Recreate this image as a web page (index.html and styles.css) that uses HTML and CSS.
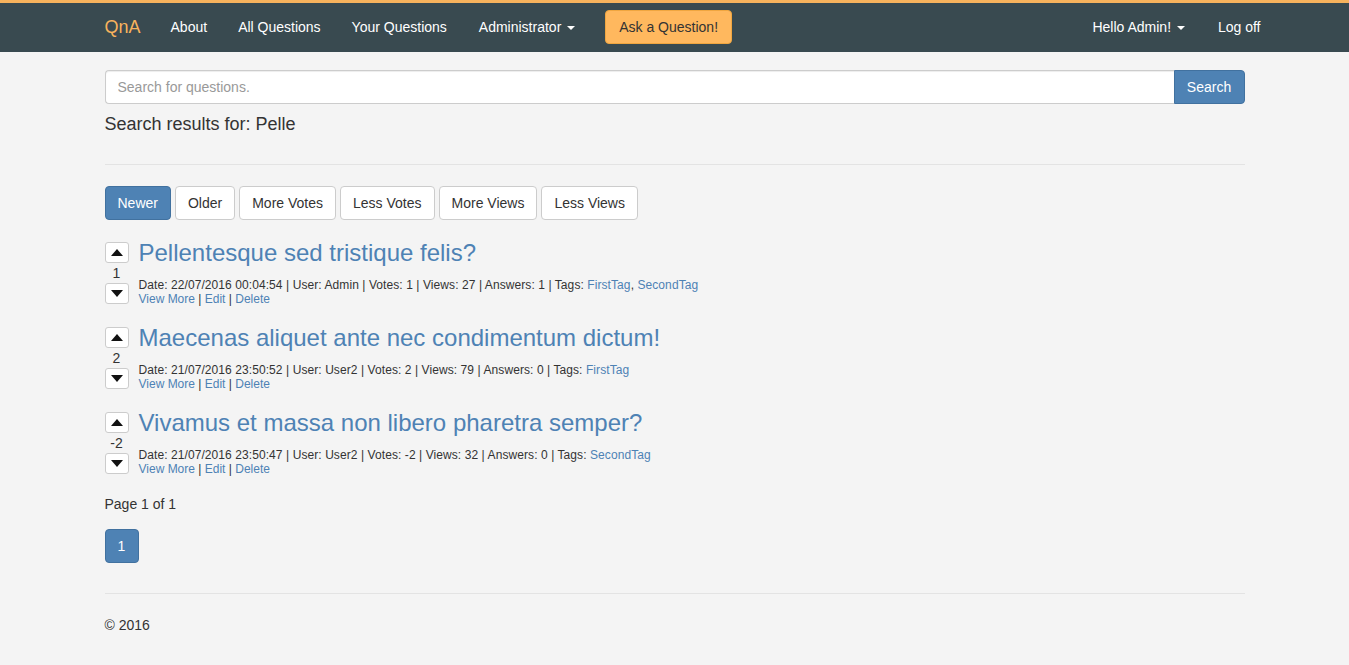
FILE: index.html
```html
<!DOCTYPE html>
<html>
<head>
<meta charset="utf-8">
<title>QnA</title>
<link rel="stylesheet" href="styles.css">
</head>
<body>
<nav class="navbar">
  <div class="nav-inner">
    <a class="brand" href="#">QnA</a>
    <ul class="nav-links">
      <li><a href="#">About</a></li>
      <li><a href="#">All Questions</a></li>
      <li><a href="#">Your Questions</a></li>
      <li><a href="#">Administrator <span class="caret"></span></a></li>
      <li><a class="ask-btn" href="#">Ask a Question!</a></li>
    </ul>
    <ul class="nav-links nav-right">
      <li><a href="#">Hello Admin! <span class="caret"></span></a></li>
      <li><a href="#">Log off</a></li>
    </ul>
  </div>
</nav>

<main class="container">
  <form class="search-group">
    <input class="search-input" type="text" placeholder="Search for questions.">
    <button class="search-btn" type="button">Search</button>
  </form>
  <h4 class="results-title">Search results for: Pelle</h4>
  <hr class="rule rule-top">

  <div class="sort-bar">
    <button class="btn btn-active">Newer</button>
    <button class="btn">Older</button>
    <button class="btn">More Votes</button>
    <button class="btn">Less Votes</button>
    <button class="btn">More Views</button>
    <button class="btn">Less Views</button>
  </div>

  <div class="question">
    <div class="votes">
      <button class="vote-btn"><span class="tri-up"></span></button>
      <div class="vote-count">1</div>
      <button class="vote-btn"><span class="tri-down"></span></button>
    </div>
    <div class="q-body">
      <h3 class="q-title"><a href="#">Pellentesque sed tristique felis?</a></h3>
      <div class="q-meta q-info">Date: 22/07/2016 00:04:54 | User: Admin | Votes: 1 | Views: 27 | Answers: 1 | Tags: <a href="#">FirstTag</a>, <a href="#">SecondTag</a></div>
      <div class="q-meta"><a href="#">View More</a> | <a href="#">Edit</a> | <a href="#">Delete</a></div>
    </div>
  </div>

  <div class="question">
    <div class="votes">
      <button class="vote-btn"><span class="tri-up"></span></button>
      <div class="vote-count">2</div>
      <button class="vote-btn"><span class="tri-down"></span></button>
    </div>
    <div class="q-body">
      <h3 class="q-title"><a href="#">Maecenas aliquet ante nec condimentum dictum!</a></h3>
      <div class="q-meta q-info">Date: 21/07/2016 23:50:52 | User: User2 | Votes: 2 | Views: 79 | Answers: 0 | Tags: <a href="#">FirstTag</a></div>
      <div class="q-meta"><a href="#">View More</a> | <a href="#">Edit</a> | <a href="#">Delete</a></div>
    </div>
  </div>

  <div class="question">
    <div class="votes">
      <button class="vote-btn"><span class="tri-up"></span></button>
      <div class="vote-count">-2</div>
      <button class="vote-btn"><span class="tri-down"></span></button>
    </div>
    <div class="q-body">
      <h3 class="q-title"><a href="#">Vivamus et massa non libero pharetra semper?</a></h3>
      <div class="q-meta q-info">Date: 21/07/2016 23:50:47 | User: User2 | Votes: -2 | Views: 32 | Answers: 0 | Tags: <a href="#">SecondTag</a></div>
      <div class="q-meta"><a href="#">View More</a> | <a href="#">Edit</a> | <a href="#">Delete</a></div>
    </div>
  </div>

  <p class="page-info">Page 1 of 1</p>
  <div class="pagination"><a class="page-item" href="#">1</a></div>

  <hr class="rule rule-bottom">
  <footer class="footer">© 2016</footer>
</main>
</body>
</html>
```

FILE: styles.css
```css
* { box-sizing: border-box; }
html, body { margin: 0; padding: 0; }
body {
  background: #f4f4f4;
  font-family: "Liberation Sans", Arial, sans-serif;
  font-size: 14px;
  line-height: 20px;
  color: #333;
}
a { color: #4e82b4; text-decoration: none; }

.navbar {
  background: #394a50;
  border-top: 3px solid #f7b35d;
  height: 52px;
}
.nav-inner {
  width: 1170px;
  margin: 0 auto;
  padding: 0 15px;
  display: flex;
  align-items: center;
  height: 49px;
}
.brand {
  color: #f7b35d;
  font-size: 18px;
  line-height: 20px;
  padding: 14px 15px 16px 0;
}
.nav-links {
  list-style: none;
  margin: 0;
  padding: 0;
  display: flex;
  align-items: center;
}
.nav-links a {
  display: block;
  color: #fff;
  padding: 13px 15px 15px;
  line-height: 20px;
}
.nav-links li:nth-child(2) a,
.nav-links li:nth-child(3) a { margin-left: 1px; }
.nav-links li:nth-child(4) a { margin-left: 2px; }
.nav-links .ask-btn {
  background: #ffb85e;
  color: #333;
  border: 1px solid #f0a640;
  border-radius: 4px;
  padding: 6px 13px;
  margin: -1px 0 0 15px;
}
.nav-right { margin-left: auto; margin-right: -31px; }
.nav-right li:first-child a { margin-right: 2px; }
.caret {
  display: inline-block;
  width: 0;
  height: 0;
  margin-left: 2px;
  vertical-align: middle;
  border-top: 4px solid #fff;
  border-left: 4px solid transparent;
  border-right: 4px solid transparent;
}

.container {
  width: 1170px;
  margin: 0 auto;
  padding: 18px 15px 0;
}
.search-group { display: flex; margin: 0; }
.search-input {
  flex: 1;
  height: 34px;
  border: 1px solid #ccc;
  border-right: none;
  border-radius: 4px 0 0 4px;
  padding: 6px 12px;
  font-family: inherit;
  font-size: 14px;
  background: #fff;
  color: #555;
  box-shadow: inset 0 1px 1px rgba(0,0,0,.075);
}
.search-input::placeholder { color: #999; }
.search-btn {
  height: 34px;
  width: 71px;
  background: #4e82b4;
  border: 1px solid #41719f;
  border-radius: 0 4px 4px 0;
  color: #fff;
  font-family: inherit;
  font-size: 14px;
  padding: 6px 12px;
}
.results-title {
  font-size: 18px;
  font-weight: normal;
  line-height: 20px;
  margin: 10px 0 0;
}
.rule {
  border: 0;
  border-top: 1px solid #e3e3e3;
  margin: 0;
}
.rule-top { margin-top: 30px; }

.sort-bar {
  margin-top: 21px;
  display: flex;
  gap: 4px;
}
.btn {
  height: 34px;
  padding: 6px 12px;
  font-family: inherit;
  font-size: 14px;
  line-height: 20px;
  background: #fff;
  color: #333;
  border: 1px solid #ccc;
  border-radius: 4px;
}
.btn-active {
  background: #4e82b4;
  border-color: #41719f;
  color: #fff;
}

.question {
  display: flex;
  gap: 10px;
  margin-top: 19px;
  height: 66px;
}
.sort-bar + .question { margin-top: 20px; }
.votes {
  width: 24px;
  display: flex;
  flex-direction: column;
  align-items: center;
  padding-top: 2px;
}
.vote-btn {
  width: 24px;
  height: 21px;
  padding: 0;
  background: #fff;
  border: 1px solid #ccc;
  border-radius: 3px;
  display: flex;
  align-items: center;
  justify-content: center;
}
.tri-up, .tri-down {
  width: 0;
  height: 0;
  border-left: 6px solid transparent;
  border-right: 6px solid transparent;
}
.tri-up { border-bottom: 7px solid #111; }
.tri-down { border-top: 7px solid #111; }
.vote-count {
  height: 20px;
  line-height: 20px;
  font-size: 14px;
  text-align: center;
  white-space: nowrap;
}
.q-title {
  margin: 0 0 12px;
  font-size: 24px;
  font-weight: normal;
  line-height: 26px;
}
.q-meta {
  font-size: 12px;
  line-height: 14px;
}
.q-info { letter-spacing: 0.08px; }

.page-info {
  margin: 18px 0 0;
  line-height: 20px;
}
.pagination {
  margin-top: 15px;
  display: flex;
}
.page-item {
  display: block;
  width: 34px;
  height: 34px;
  line-height: 32px;
  text-align: center;
  background: #4e82b4;
  border: 1px solid #41719f;
  border-radius: 4px;
  color: #fff;
}
.rule-bottom { margin-top: 30px; }
.footer {
  margin-top: 21px;
  line-height: 20px;
}
```
